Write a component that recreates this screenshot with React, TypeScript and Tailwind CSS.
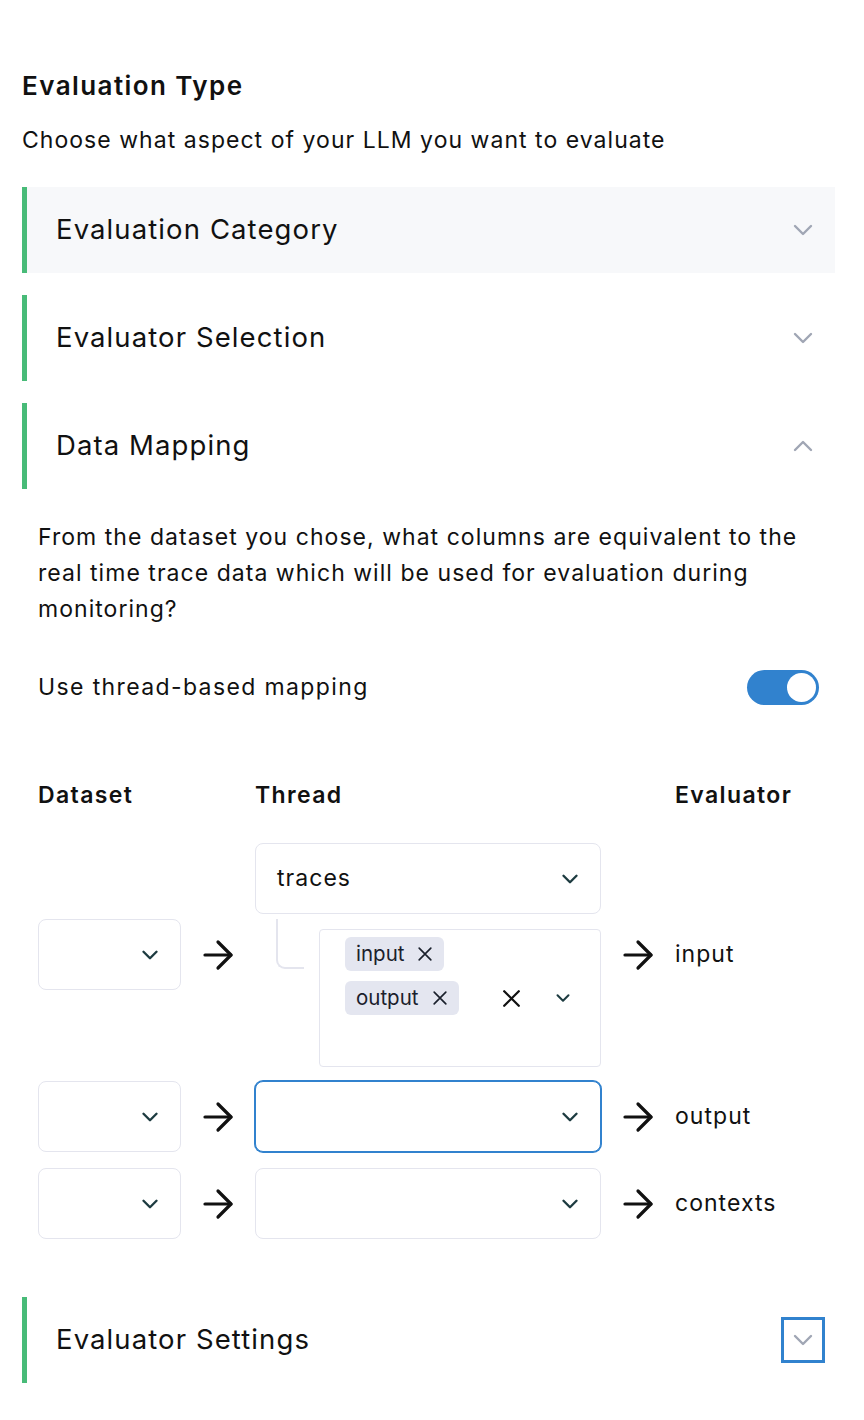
import React from "react";

const Chevron = ({
  className,
  size = 36,
  stroke = 1.7,
  up = false,
}: {
  className?: string;
  size?: number;
  stroke?: number;
  up?: boolean;
}) => (
  <svg
    width={size}
    height={size}
    viewBox="0 0 24 24"
    fill="none"
    stroke="currentColor"
    strokeWidth={stroke}
    strokeLinecap="round"
    strokeLinejoin="round"
    className={className}
  >
    <path d={up ? "M6 15l6-6 6 6" : "M6 9l6 6 6-6"} />
  </svg>
);

const Arrow = () => (
  <svg width="32" height="32" viewBox="0 0 32 32" fill="none" stroke="#111" strokeWidth="3.2" strokeLinecap="round" strokeLinejoin="round">
    <path d="M3 16h26" />
    <path d="M16 3l13 13-13 13" />
  </svg>
);

const Cross = ({ size, stroke, className }: { size: number; stroke: number; className?: string }) => (
  <svg width={size} height={size} viewBox="0 0 24 24" fill="none" stroke="currentColor" strokeWidth={stroke} strokeLinecap="round" className={className}>
    <path d="M5 5l14 14M19 5L5 19" />
  </svg>
);

function AccordionHeader({
  title,
  bg = false,
  open = false,
  focused = false,
}: {
  title: string;
  bg?: boolean;
  open?: boolean;
  focused?: boolean;
}) {
  return (
    <div
      className={`flex h-[86px] items-center justify-between border-l-[5px] border-[#48bb78] pl-[29px] pr-[10px] ${
        bg ? "bg-[#f7f8fa]" : "bg-white"
      }`}
    >
      <span className="text-[27.5px] font-normal leading-none tracking-[0.04em] text-[#111]">{title}</span>
      <span
        className={`flex h-[46px] w-[44px] items-center justify-center ${
          focused ? "border-[3px] border-[#3182ce]" : ""
        }`}
      >
        <Chevron className="text-[#a0a6b4]" size={32} stroke={1.8} up={open} />
      </span>
    </div>
  );
}

function Select({ value, focused = false, className = "" }: { value?: string; focused?: boolean; className?: string }) {
  return (
    <div
      className={`flex h-[71px] items-center justify-between rounded-[8px] border bg-white pl-[21px] pr-[17px] ${
        focused ? "border-[#3182ce] ring-1 ring-[#3182ce]" : "border-[#e4e5ee]"
      } ${className}`}
    >
      <span className="text-[23px] tracking-[0.045em] text-[#111]">{value}</span>
      <Chevron className="text-[#1d3b40]" size={26} stroke={2.2} />
    </div>
  );
}

function Tag({ label }: { label: string }) {
  return (
    <div className="flex h-[34px] items-center gap-[11px] rounded-[6px] bg-[#e4e6f0] pl-[11px] pr-[9px]">
      <span className="text-[20.5px] text-[#1a202c]">{label}</span>
      <Cross size={20} stroke={2} className="text-[#1a202c]" />
    </div>
  );
}

function Row({
  dataset,
  thread,
  evaluator,
}: {
  dataset: React.ReactNode;
  thread: React.ReactNode;
  evaluator: string;
}) {
  return (
    <div className="flex items-start">
      <div className="w-[143px]">{dataset}</div>
      <div className="flex h-[71px] w-[74px] items-center justify-center">
        <Arrow />
      </div>
      <div className="w-[346px]">{thread}</div>
      <div className="flex h-[71px] w-[74px] items-center justify-center">
        <Arrow />
      </div>
      <div className="flex h-[71px] items-center text-[23px] tracking-[0.045em] text-[#111]">{evaluator}</div>
    </div>
  );
}

export default function App() {
  return (
    <div className="min-h-[1420px] w-[864px] bg-white pl-[22px] pr-[29px] pt-[69px] font-['Inter',sans-serif] text-[#111]">
      <h2 className="text-[26px] font-semibold leading-[34px] tracking-[0.055em]">Evaluation Type</h2>
      <p className="mt-[21px] text-[23px] leading-[33px] tracking-[0.045em]">
        Choose what aspect of your LLM you want to evaluate
      </p>

      <div className="mt-[30px] flex flex-col gap-[22px]">
        <AccordionHeader title="Evaluation Category" bg />
        <AccordionHeader title="Evaluator Selection" />

        <div>
          <AccordionHeader title="Data Mapping" open />
          <div className="px-[16px] pb-[36px] pt-[30px]">
            <p className="text-[23px] leading-[36px] tracking-[0.045em]">
              From the dataset you chose, what columns are equivalent to the real time trace data which will be used for
              evaluation during monitoring?
            </p>

            <div className="mt-[43px] flex items-center justify-between">
              <span className="text-[23px] leading-[33px] tracking-[0.06em]">Use thread-based mapping</span>
              <div className="flex h-[35px] w-[72px] items-center justify-end rounded-full bg-[#3182ce] p-[3px]">
                <div className="h-[29px] w-[29px] rounded-full bg-white" />
              </div>
            </div>

            <div className="mt-[74px] flex text-[23px] font-semibold leading-[33px] tracking-[0.06em]">
              <div className="w-[217px]">Dataset</div>
              <div className="w-[420px]">Thread</div>
              <div>Evaluator</div>
            </div>

            <div className="mt-[31px] flex">
              <div className="w-[217px]" />
              <Select value="traces" className="w-[346px]" />
            </div>

            <div className="mt-[5px] flex flex-col">
              <Row
                dataset={<Select />}
                evaluator="input"
                thread={
                  <div className="flex">
                    <div className="ml-[21px] h-[50px] w-[28px] rounded-bl-[9px] border-b-2 border-l-2 border-[#e4e5ee]" />
                    <div className="ml-[15px] mt-[10px] flex h-[138px] flex-1 items-center rounded-[4px] border border-[#e4e5ee] pl-[25px] pr-[26px]">
                      <div className="flex flex-1 flex-col items-start gap-[10px] self-start pt-[7px]">
                        <Tag label="input" />
                        <Tag label="output" />
                      </div>
                      <div className="flex items-center gap-[28px]">
                        <Cross size={25} stroke={2.2} className="text-[#111]" />
                        <Chevron className="text-[#1d3b40]" size={22} stroke={2.2} />
                      </div>
                    </div>
                  </div>
                }
              />
              <div className="mt-[14px]">
                <Row dataset={<Select />} thread={<Select focused />} evaluator="output" />
              </div>
              <div className="mt-[16px]">
                <Row dataset={<Select />} thread={<Select />} evaluator="contexts" />
              </div>
            </div>
          </div>
        </div>

        <AccordionHeader title="Evaluator Settings" focused />
      </div>
    </div>
  );
}
